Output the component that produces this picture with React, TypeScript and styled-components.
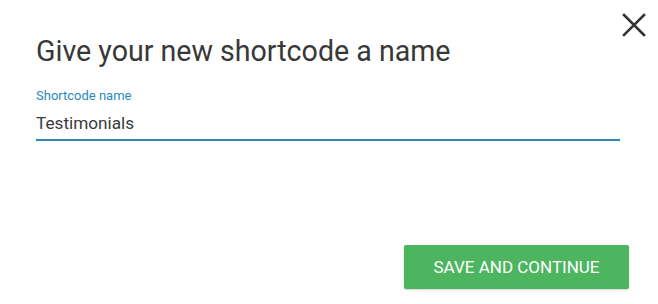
import React from "react";
import styled, { createGlobalStyle } from "styled-components";

const Global = createGlobalStyle`
  html, body { margin: 0; padding: 0; background: #ffffff; }
  body { font-family: Roboto, "Liberation Sans", sans-serif; }
  * { box-sizing: border-box; }
`;

const Dialog = styled.div`
  position: relative;
  width: 658px;
  height: 304px;
  padding: 34px 38px 15px 36px;
  display: flex;
  flex-direction: column;
  background: #fff;
`;

const CloseButton = styled.button`
  position: absolute;
  top: 12px;
  right: 11px;
  width: 26px;
  height: 26px;
  padding: 0;
  border: 0;
  background: transparent;
  display: flex;
  align-items: center;
  justify-content: center;
  cursor: pointer;
`;

const Title = styled.h2`
  margin: 0;
  font-family: Roboto, "Liberation Sans", sans-serif;
  font-weight: 400;
  font-size: 28.6px;
  line-height: 34px;
  color: #383838;
`;

const Field = styled.label`
  display: flex;
  flex-direction: column;
  margin-top: 20px;
  width: 584px;
`;

const FieldLabel = styled.span`
  font-size: 13px;
  line-height: 16px;
  color: #2a8bbb;
`;

const Input = styled.input`
  font-family: Roboto, "Liberation Sans", sans-serif;
  font-size: 17.2px;
  line-height: 22px;
  color: #3a3a3a;
  border: 0;
  border-bottom: 2px solid #2a86b3;
  padding: 8px 0 5px 0;
  margin: 0;
  outline: none;
  background: transparent;
`;

const Actions = styled.div`
  margin-top: auto;
  display: flex;
  justify-content: flex-end;
`;

const PrimaryButton = styled.button`
  width: 225px;
  height: 44px;
  margin-right: -9px;
  border: 0;
  border-radius: 2px;
  background: #4db560;
  color: #ffffff;
  font-family: Roboto, "Liberation Sans", sans-serif;
  font-size: 17px;
  font-weight: 400;
  text-transform: uppercase;
  box-shadow: 0 1px 2px rgba(0, 0, 0, 0.18);
  cursor: pointer;
`;

export default function App() {
  return (
    <>
      <Global />
      <Dialog>
        <CloseButton aria-label="Close">
          <svg width="24" height="24" viewBox="0 0 24 24">
            <path d="M2 2 L22 22 M22 2 L2 22" stroke="#333" strokeWidth="2.6" strokeLinecap="square" />
          </svg>
        </CloseButton>
        <Title>Give your new shortcode a name</Title>
        <Field>
          <FieldLabel>Shortcode name</FieldLabel>
          <Input defaultValue="Testimonials" />
        </Field>
        <Actions>
          <PrimaryButton>Save and continue</PrimaryButton>
        </Actions>
      </Dialog>
    </>
  );
}
